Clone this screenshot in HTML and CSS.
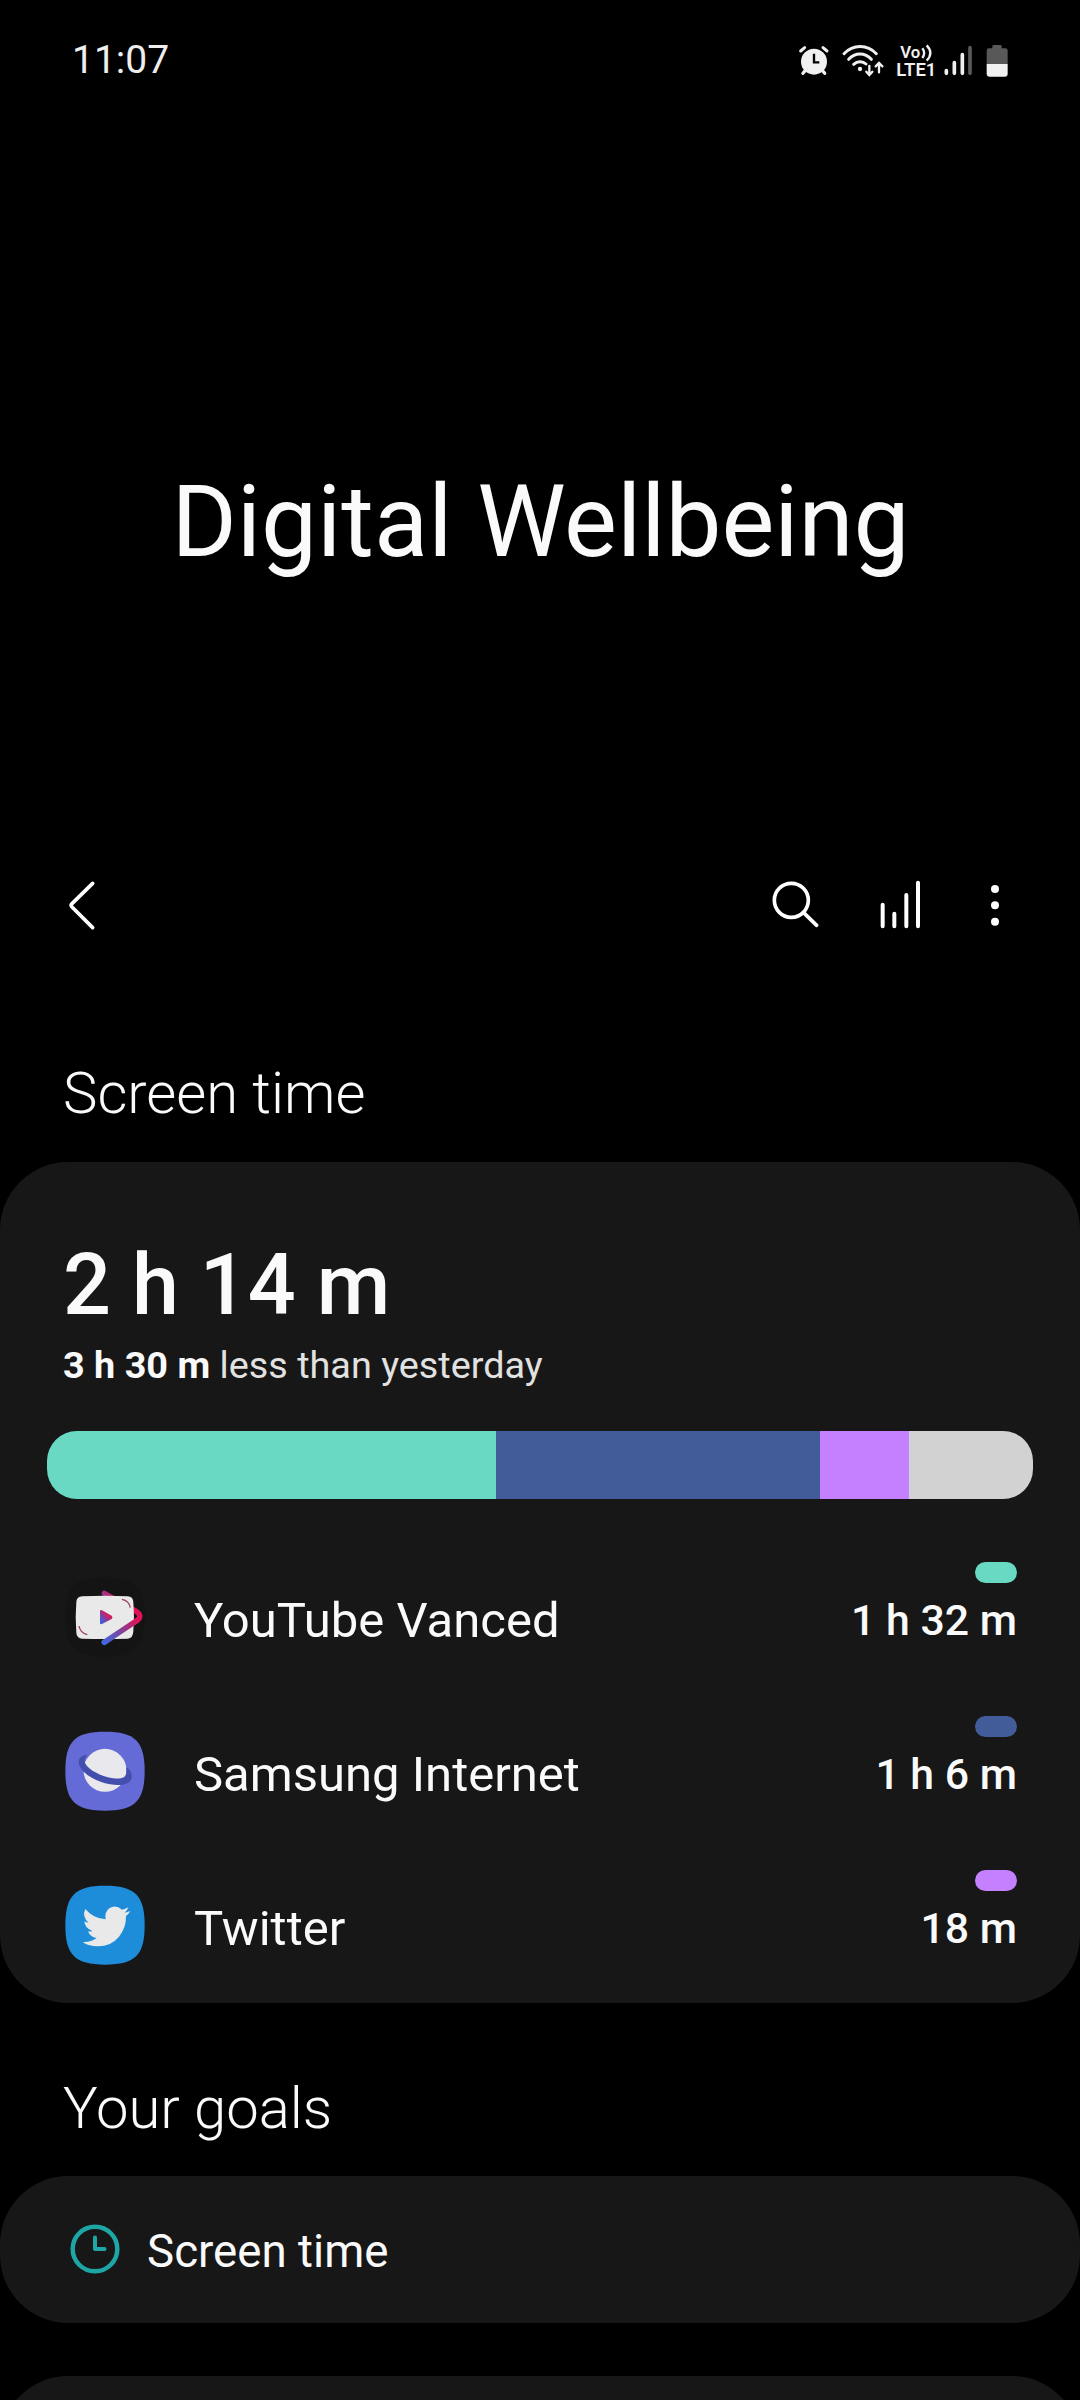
FILE: index.html
```html
<!DOCTYPE html>
<html lang="en">
<head>
<meta charset="utf-8">
<title>Digital Wellbeing</title>
<link rel="stylesheet" href="styles.css">
</head>
<body>
<div class="screen">
  <div class="status">
    <span class="clock">11:07</span>
    <div class="indicators">
      <svg width="40" height="60" viewBox="50 0 120 180">
        <g fill="none" stroke="#f0f0f0" stroke-linecap="round">
          <path d="M61 63L73 53M140 63L128 53" stroke-width="9"/>
          <path d="M76 120L68 130M125 120L133 130" stroke-width="10"/>
        </g>
        <circle cx="101" cy="95" r="39" fill="#f0f0f0"/>
        <path d="M101 71V97H117" fill="none" stroke="#000" stroke-width="7"/>
      </svg>
      <svg width="50" height="60" viewBox="180 0 150 180">
        <g fill="none" stroke="#f0f0f0" stroke-width="9" stroke-linecap="round">
          <path d="M192 71C219 42 262 42 289 71M206 88C225 67 255 67 274 88M221 103C232 93 248 93 258 102"/>
          <path d="M268 108V134M259 125L268 135L277 125M297 127V101M287 109L297 99L307 109" stroke-width="7"/>
        </g>
        <circle cx="240" cy="117" r="6.500" fill="#f0f0f0"/>
      </svg>
      <svg class="volte" width="45" height="60" viewBox="340 0 135 180">
        <text x="359" y="85" font-size="51" textLength="60" lengthAdjust="spacingAndGlyphs">Vo</text>
        <text x="347" y="137" font-size="53" textLength="120" lengthAdjust="spacingAndGlyphs">LTE1</text>
        <path d="M425 55Q436 69 425 84M438 46Q460 69 438 92" fill="none" stroke="#f0f0f0" stroke-width="7"/>
      </svg>
      <svg width="34" height="60" viewBox="485 0 102 180">
        <g stroke="#f0f0f0" stroke-width="11" stroke-linecap="round">
          <path d="M498 122V130M522 98V130M546 74V130"/>
          <path d="M569 53V130" stroke="#5a5a5a"/>
        </g>
      </svg>
      <svg width="30" height="60" viewBox="610 0 90 180">
        <path d="M621 102V62Q621 55 628 55H638V49Q638 45 642 45H662Q666 45 666 49V55H677Q684 55 684 62V102Z" fill="#585858"/>
        <path d="M621 102H684V131Q684 140 675 140H630Q621 140 621 131Z" fill="#f0f0f0"/>
      </svg>
    </div>
  </div>

  <h1 class="title">Digital Wellbeing</h1>

  <div class="toolbar">
    <svg width="40" height="60" viewBox="60 75 120 180">
      <path d="M158 100L96 161Q91 166 96 171L158 233" fill="none" stroke="#fff" stroke-width="11" stroke-linecap="round"/>
    </svg>
    <div class="actions">
      <svg width="60" height="60" viewBox="75 75 180 180">
        <g fill="none" stroke="#fff" stroke-width="11">
          <circle cx="154" cy="151" r="51"/>
          <path d="M190 187L230 226" stroke-linecap="round"/>
        </g>
      </svg>
      <svg width="60" height="60" viewBox="390 75 180 180">
        <path d="M428 164V229M463 191V229M499 135V229M534 98V229" stroke="#fff" stroke-width="12" stroke-linecap="round"/>
      </svg>
      <svg width="40" height="60" viewBox="703 75 120 180">
        <g fill="#fff"><circle cx="763" cy="117" r="12"/><circle cx="763" cy="166" r="12"/><circle cx="763" cy="215" r="12"/></g>
      </svg>
    </div>
  </div>

  <h2 class="heading">Screen time</h2>
  <section class="card usage">
    <div class="total">2 h 14 m</div>
    <div class="compare"><b>3 h 30 m</b> less than yesterday</div>
    <div class="bar">
      <span class="mint" style="width:449px"></span><span class="blue" style="width:324px"></span><span class="violet" style="width:89px"></span><span class="rest"></span>
    </div>
    <div class="app">
      <svg class="icon" width="80" height="80" viewBox="45 21 240 240">
        <defs><linearGradient id="ribbon" gradientUnits="userSpaceOnUse" x1="162" y1="218" x2="262" y2="150"><stop stop-color="#4168e4"/><stop offset=".5" stop-color="#7c449b"/><stop offset="1" stop-color="#e01257"/></linearGradient>
        <linearGradient id="play" x1="0" y1="1" x2="1" y2="0"><stop offset=".2" stop-color="#4959cf"/><stop offset=".65" stop-color="#d51b60"/></linearGradient></defs>
        <path d="M165 22C255 22 284 51 284 141S255 260 165 260 46 231 46 141 75 22 165 22Z" fill="#141415"/>
        <path d="M163 70L260 125Q278 137 262 151L163 217" fill="none" stroke="url(#ribbon)" stroke-width="16" stroke-linecap="round" stroke-linejoin="round"/>
        <path d="M97 79Q165 75 233 79Q249 80 250 96Q254 142 250 184Q249 205 233 206Q165 208 97 206Q80 205 79 188Q75 142 79 96Q80 80 97 79Z" fill="#e9e9e9"/>
        <path d="M262 151L163 217" stroke="url(#ribbon)" stroke-width="16" stroke-linecap="round"/>
        <path d="M150 124Q150 118 156 121L185 137Q190 142 185 147L156 162Q150 164 150 158Z" fill="url(#play)"/>
        <path d="M216 88Q237 92 241 113M87 168Q91 189 112 194" fill="none" stroke="#a23b68" stroke-width="4"/>
      </svg>
      <span class="name">YouTube Vanced</span>
      <div class="spent"><i class="pill mint"></i>1 h 32 m</div>
    </div>
    <div class="app">
      <svg class="icon" width="80" height="80" viewBox="45 63 240 240">
        <path d="M165 65C255 65 284 94 284 183S255 302 165 302 46 273 46 183 75 65 165 65Z" fill="#656bd6"/>
        <circle cx="165" cy="181" r="64.500" fill="#e9e9ed"/>
        <path d="M113 134C89 135 82 151 88 166C98 192 137 215 180 223C218 230 244 221 245 201C246 187 240 179 229 171V189C227 203 214 208 190 205C153 200 119 181 107 163C101 152 104 142 113 134Z" fill="#444eac"/>
      </svg>
      <span class="name">Samsung Internet</span>
      <div class="spent"><i class="pill blue"></i>1 h 6 m</div>
    </div>
    <div class="app">
      <svg class="icon" width="80" height="80" viewBox="45 525 240 240">
        <path d="M165 527C255 527 284 556 284 646S255 764 165 764 46 735 46 646 75 527 165 527Z" fill="#1d8dda"/>
        <path d="M98 696Q121 698 140 684Q120 681 114 664Q121 666 127 663Q104 654 103 634Q109 638 116 638Q95 620 106 597Q130 626 167 628Q163 606 178 595Q197 583 216 599Q226 597 235 592Q232 602 224 608Q233 607 241 603Q236 612 228 618Q229 652 207 680Q183 709 144 709Q116 709 98 696Z" fill="#e9e9e9"/>
      </svg>
      <span class="name">Twitter</span>
      <div class="spent"><i class="pill violet"></i>18 m</div>
    </div>
  </section>

  <h2 class="heading goals">Your goals</h2>
  <section class="card goal">
    <svg width="50" height="50" viewBox="0 0 50 50">
      <g fill="none" stroke="#1ea6a6" stroke-linecap="round" stroke-linejoin="round"><circle cx="25" cy="25" r="22.300" stroke-width="4.500"/><path d="M25 13.500V25H34.500" stroke-width="4"/></g>
    </svg>
    <span>Screen time</span>
  </section>
  <section class="card next"></section>
</div>
</body>
</html>
```
FILE: styles.css
```css
* { box-sizing: border-box; }
body { margin: 0; background: #000; }
svg { display: block; flex: none; }
.screen {
  width: 1080px; height: 2400px; overflow: hidden;
  display: flex; flex-direction: column;
  background: #000; color: #fafafa;
  font-family: Roboto, "Noto Sans", sans-serif;
}
.screen > * { flex: none; }
.status {
  height: 90px; padding: 30px 67px 0 72px;
  display: flex; justify-content: space-between;
}
.clock { font-size: 39px; line-height: 60px; color: #eee; }
.indicators { display: flex; }
.indicators svg:nth-child(1) { margin-right: 3px; }
.indicators svg:nth-child(2) { margin-right: 4px; }
.indicators svg:nth-child(3) { margin-right: 3px; }
.indicators svg:nth-child(4) { margin-right: 7px; }
.volte text { fill: #f0f0f0; font-weight: 600; }
.title {
  margin: 372px 0 0; height: 120px; line-height: 120px; padding-left: 1px;
  font-size: 99.700px; font-weight: 400; text-align: center;
}
.toolbar {
  height: 60px; margin-top: 293px; padding: 0 65px 0 60px;
  display: flex; justify-content: space-between;
}
.actions { display: flex; gap: 45px; }
.heading {
  margin: 118px 0 0; padding-left: 63px; height: 80px; line-height: 80px;
  font-size: 58px; font-weight: 300;
}
.card { background: #171717; border-radius: 68px; }
.usage { margin-top: 29px; height: 841px; padding: 74px 47px 0; }
.total { padding-left: 16px; height: 100px; line-height: 100px; font-size: 84.400px; font-weight: 500; }
.compare { padding-left: 16px; height: 50px; margin-top: 4px; line-height: 50px; font-size: 37.800px; color: #e2e2e2; }
.compare b { color: #fafafa; }
.bar { display: flex; height: 68px; margin-top: 41px; border-radius: 30px; overflow: hidden; }
.mint { background: #69d9c3; }
.blue { background: #415c99; }
.violet { background: #c580ff; }
.rest { flex: 1; background: #d2d2d2; }
.app { height: 154px; display: flex; align-items: center; padding: 0 16px 0 18px; }
.bar + .app { margin-top: 41px; }
.name { margin-left: 49px; font-size: 49px; line-height: 60px; padding-top: 8px; }
.spent {
  margin-left: auto; display: flex; flex-direction: column; align-items: flex-end;
  font-size: 42.800px; line-height: 50px; font-weight: 500; padding-bottom: 28px;
}
.pill { width: 42px; height: 21px; border-radius: 10.5px; margin-bottom: 12px; }
.goals { margin-top: 65px; }
.goal {
  height: 147px; margin-top: 28px; padding: 0 0 0 69.500px;
  display: flex; align-items: center; font-size: 45.700px;
}
.goal svg { margin-bottom: 2px; }
.goal span { margin-left: 27.500px; padding-top: 4px; }
.next { height: 147px; margin-top: 53px; }
```
